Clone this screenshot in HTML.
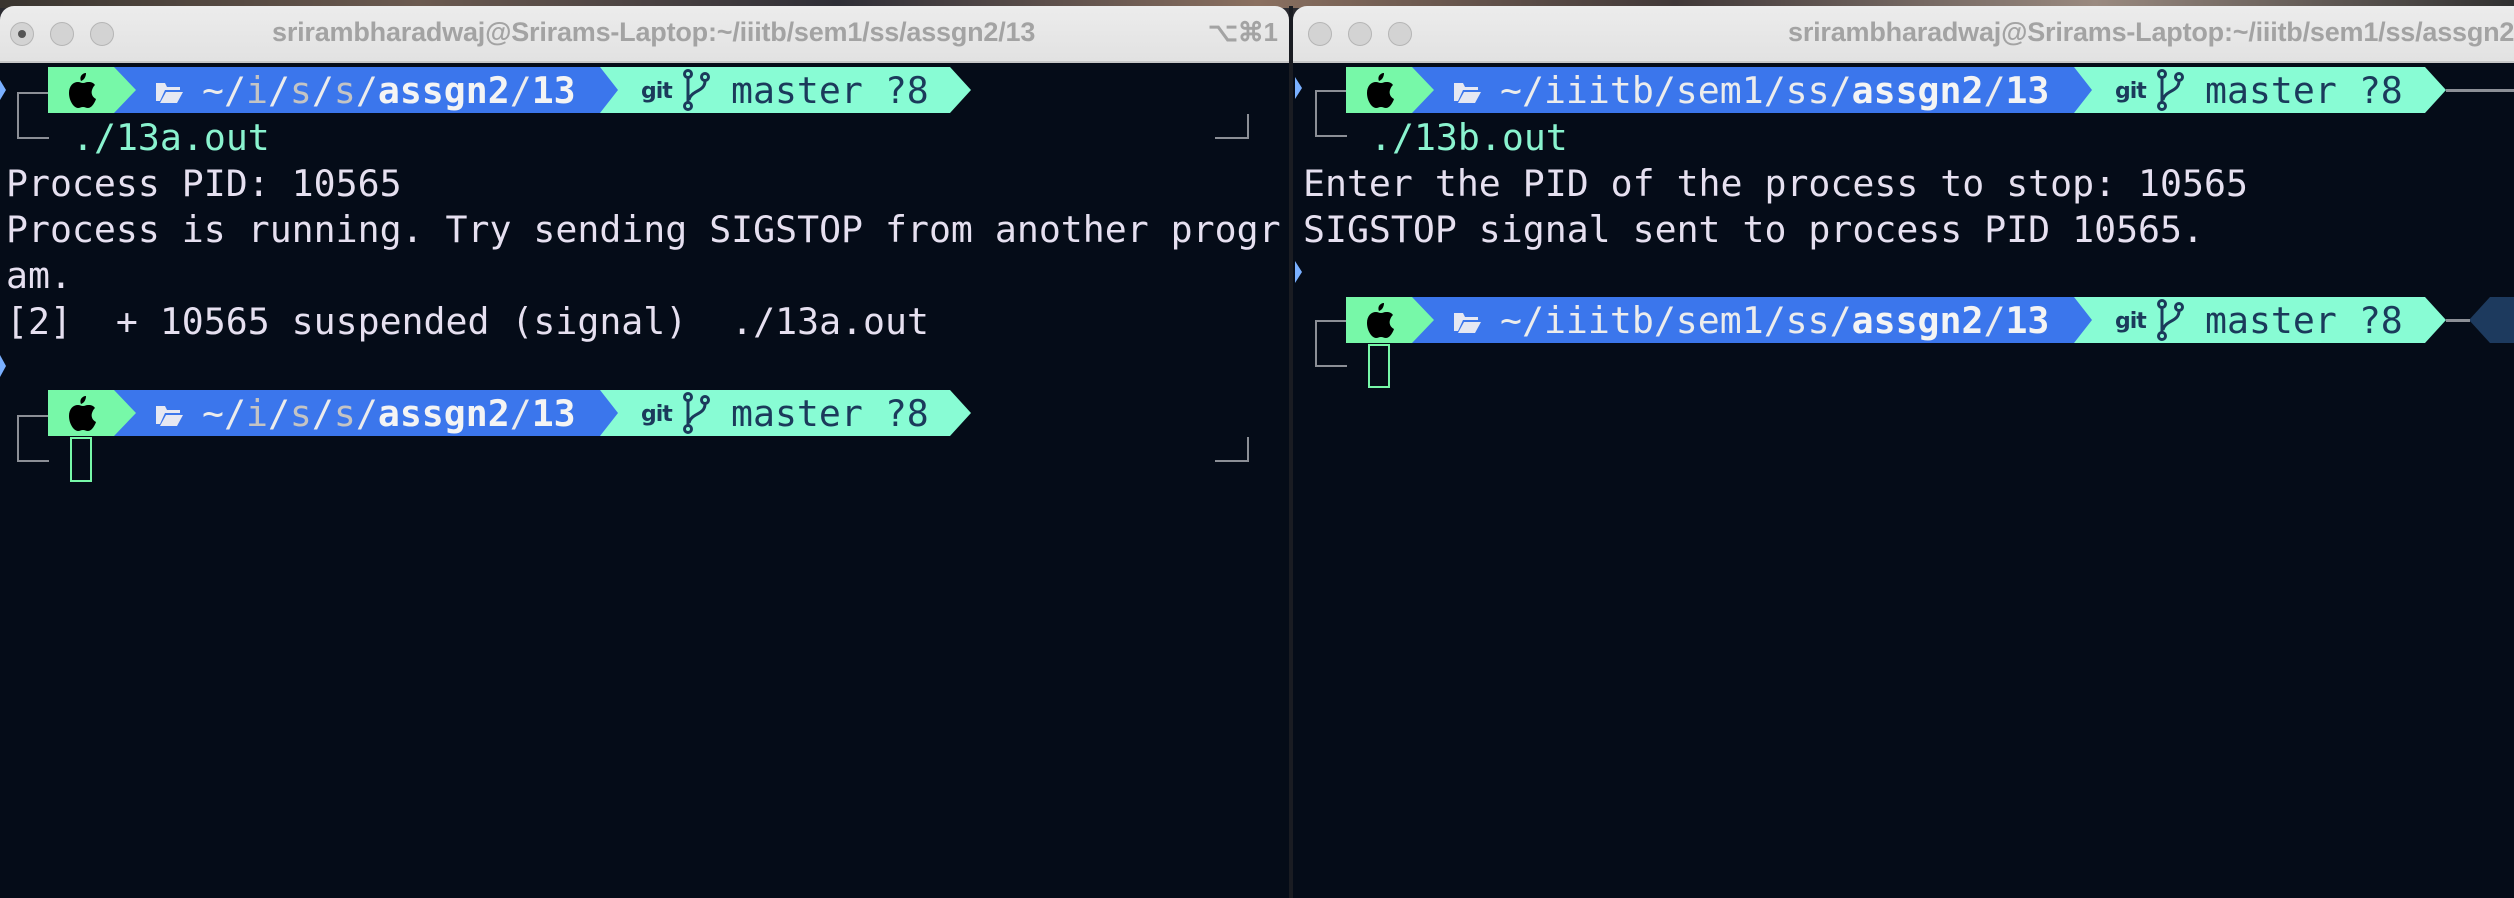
<!DOCTYPE html>
<html><head><meta charset="utf-8"><style>
*{margin:0;padding:0;box-sizing:border-box}
body{width:2514px;height:898px;overflow:hidden;background:#2a2a30;position:relative;font-family:"DejaVu Sans Mono","Liberation Mono",monospace}
.abs{position:absolute}
.tb{background:linear-gradient(#ececec,#e2e2e2);border-bottom:2px solid #c8c8c8;top:6px;height:57px;border-radius:14px 14px 0 0}
.term{background:#050c18;top:63px;height:835px}
.tl{position:absolute;width:24px;height:24px;border-radius:50%;background:#d3d3d3;border:1px solid #b5b5b5;top:22px}
.title{position:absolute;top:17px;font:bold 27px "Liberation Sans",sans-serif;color:#a3a3a3;white-space:nowrap;letter-spacing:-0.2px}
.t{position:absolute;font-size:36.5px;line-height:46px;height:46px;color:#e6e0f0;white-space:pre}
.c{color:#8af3cf}
.dim{color:#c4c4c4}
.w{color:#ececec}
.b{font-weight:bold;color:#f4f4f4}
.nv{color:#1b3a5b}
.git{position:absolute;font:bold 22px "DejaVu Sans",sans-serif;color:#1b3a5b;letter-spacing:-1px}
.ln{position:absolute;background:#8c8f96}
</style></head><body>
<div class="abs" style="left:0;top:0;width:2514px;height:8px;background:linear-gradient(90deg,#3a3530,#6b5a50,#2e2e36,#8a7060,#403838,#9a8a80,#303030)"></div>

<!-- LEFT WINDOW -->
<div class="abs tb" style="left:0;width:1289px"></div>
<div class="tl" style="left:10px"><div style="position:absolute;left:7px;top:7px;width:8px;height:8px;border-radius:50%;background:#555"></div></div>
<div class="tl" style="left:50px"></div>
<div class="tl" style="left:90px"></div>
<div class="title" style="left:272px">srirambharadwaj@Srirams-Laptop:~/iiitb/sem1/ss/assgn2/13</div>
<div class="title" style="left:1208px;font-size:26px">⌥⌘1</div>
<div class="abs term" style="left:0;width:1289px"></div>
<div class="abs" style="left:1289px;top:6px;width:4px;height:892px;background:#1a1c22"></div>

<!-- RIGHT WINDOW -->
<div class="abs tb" style="left:1293px;width:1221px;border-radius:14px 0 0 0"></div>
<div class="tl" style="left:1308px"></div>
<div class="tl" style="left:1348px"></div>
<div class="tl" style="left:1388px"></div>
<div class="title" style="left:1788px">srirambharadwaj@Srirams-Laptop:~/iiitb/sem1/ss/assgn2/13</div>
<div class="abs term" style="left:1293px;width:1221px"></div>

<svg class="abs" style="left:0;top:0" width="2514" height="898">
<defs>
<g id="apple"><path d="M14 8 C12 3 16 0 19 0 C19 4 17 7 14 8 Z M11 9 C6 9 2 13 2 20 C2 28 7 35 11 35 C13 35 14 34 16 34 C18 34 19 35 21 35 C25 35 28 29 29 26 C25 24 24 20 25 17 C26 14 27 13 28 12 C26 9 23 9 21 9 C19 9 18 10 16 10 C14 10 13 9 11 9 Z" fill="#000"/></g>
<g id="folder"><path d="M0 4 L0 22 L4 22 L9 11 L24 11 L24 8 L11 8 L9 4 Z M10 13 L4 24 L21 24 L27 13 Z" fill="#e6e8f2"/></g>
<g id="branch" fill="none" stroke="#1b3a5b" stroke-width="3"><circle cx="5" cy="4" r="3.5"/><circle cx="5" cy="36" r="3.5"/><circle cx="22" cy="7" r="3.5"/><path d="M5 8 L5 32 M22 11 C22 22 8 20 6 30"/></g>
</defs>
<g id="p1">
<polygon points="600,67 950,67 971,90 950,113 600,113" fill="#88fcd4"/>
<polygon points="114,67 600,67 618,90 600,113 114,113" fill="#3b76ec"/>
<polygon points="48,67 114,67 136,90 114,113 48,113" fill="#77f8a8"/>
<use href="#apple" x="67" y="73"/>
<use href="#folder" x="156" y="79"/>
<use href="#branch" x="683" y="70"/>
</g>
<use href="#p1" y="323"/>
<use href="#p1" x="1298"/>
<use href="#p1" x="1298" y="230"/>
<polygon points="1898,67 2074,67 2074,113 1898,113" fill="#3b76ec"/>
<polygon points="2074,67 2074,113 2092,90" fill="#3b76ec"/>
<polygon points="1898,297 2074,297 2074,343 1898,343" fill="#3b76ec"/>
<polygon points="2074,297 2074,343 2092,320" fill="#3b76ec"/>
<polygon points="0,80 6,90 0,100" fill="#7ab0ff"/>
<polygon points="0,355 6,366 0,377" fill="#7ab0ff"/>
<polygon points="1295,77 1302,88 1295,99" fill="#7ab0ff"/>
<polygon points="1295,261 1302,272 1295,283" fill="#7ab0ff"/>
<polygon points="2490,297 2514,297 2514,343 2490,343 2469,320" fill="#1d3a5e"/>
<rect x="71" y="438" width="20" height="43" fill="none" stroke="#77f8a8" stroke-width="2"/>
<rect x="1369" y="345" width="20" height="42" fill="none" stroke="#77f8a8" stroke-width="2"/>
</svg>

<svg class="abs" style="left:0;top:0" width="2514" height="898">
<g id="tr">
<polygon points="2074,67 2425,67 2446,90 2425,113 2074,113" fill="#88fcd4"/>
<polygon points="2074,67 2092,90 2074,113" fill="#3b76ec"/>
<g fill="none" stroke="#1b3a5b" stroke-width="3" transform="translate(2157,70)"><circle cx="5" cy="4" r="3.5"/><circle cx="5" cy="36" r="3.5"/><circle cx="22" cy="7" r="3.5"/><path d="M5 8 L5 32 M22 11 C22 22 8 20 6 30"/></g>
</g>
<use href="#tr" y="230"/>
<rect x="2446" y="89" width="68" height="3" fill="#8c8f96"/>
<rect x="2446" y="319" width="24" height="3" fill="#8c8f96"/>
</svg>

<div class="ln" style="left:17px;top:92px;width:31px;height:2px"></div>
<div class="ln" style="left:17px;top:92px;width:2px;height:47px"></div>
<div class="ln" style="left:17px;top:137px;width:32px;height:2px"></div>
<div class="ln" style="left:1215px;top:137px;width:34px;height:2px"></div>
<div class="ln" style="left:1247px;top:114px;width:2px;height:25px"></div>
<div class="ln" style="left:17px;top:415px;width:31px;height:2px"></div>
<div class="ln" style="left:17px;top:415px;width:2px;height:47px"></div>
<div class="ln" style="left:17px;top:460px;width:32px;height:2px"></div>
<div class="ln" style="left:1215px;top:460px;width:34px;height:2px"></div>
<div class="ln" style="left:1247px;top:437px;width:2px;height:25px"></div>
<div class="ln" style="left:1315px;top:90px;width:31px;height:2px"></div>
<div class="ln" style="left:1315px;top:90px;width:2px;height:47px"></div>
<div class="ln" style="left:1315px;top:135px;width:32px;height:2px"></div>
<div class="ln" style="left:1315px;top:320px;width:31px;height:2px"></div>
<div class="ln" style="left:1315px;top:320px;width:2px;height:47px"></div>
<div class="ln" style="left:1315px;top:365px;width:32px;height:2px"></div>

<div class="t" style="left:202px;top:68px"><span class="w">~/</span><span class="dim">i</span><span class="w">/</span><span class="dim">s</span><span class="w">/</span><span class="dim">s</span><span class="w">/</span><span class="b">assgn2</span><span class="w">/</span><span class="b">13</span></div>
<div class="git" style="left:641px;top:79px">git</div>
<div class="t nv" style="left:731px;top:68px">master ?8</div>
<div class="t c" style="left:72px;top:115px">./13a.out</div>
<div class="t" style="left:6px;top:161px">Process PID: 10565</div>
<div class="t" style="left:6px;top:207px">Process is running. Try sending SIGSTOP from another progr</div>
<div class="t" style="left:6px;top:253px">am.</div>
<div class="t" style="left:6px;top:299px">[2]  + 10565 suspended (signal)  ./13a.out</div>
<div class="t" style="left:202px;top:391px"><span class="w">~/</span><span class="dim">i</span><span class="w">/</span><span class="dim">s</span><span class="w">/</span><span class="dim">s</span><span class="w">/</span><span class="b">assgn2</span><span class="w">/</span><span class="b">13</span></div>
<div class="git" style="left:641px;top:402px">git</div>
<div class="t nv" style="left:731px;top:391px">master ?8</div>

<div class="t" style="left:1500px;top:68px"><span class="w">~/iiitb/sem1/ss/</span><span class="b">assgn2</span><span class="w">/</span><span class="b">13</span></div>
<div class="git" style="left:2115px;top:79px">git</div>
<div class="t nv" style="left:2205px;top:68px">master ?8</div>
<div class="t c" style="left:1370px;top:115px">./13b.out</div>
<div class="t" style="left:1303px;top:161px">Enter the PID of the process to stop: 10565</div>
<div class="t" style="left:1303px;top:207px">SIGSTOP signal sent to process PID 10565.</div>
<div class="t" style="left:1500px;top:298px"><span class="w">~/iiitb/sem1/ss/</span><span class="b">assgn2</span><span class="w">/</span><span class="b">13</span></div>
<div class="git" style="left:2115px;top:309px">git</div>
<div class="t nv" style="left:2205px;top:298px">master ?8</div>
</body></html>
